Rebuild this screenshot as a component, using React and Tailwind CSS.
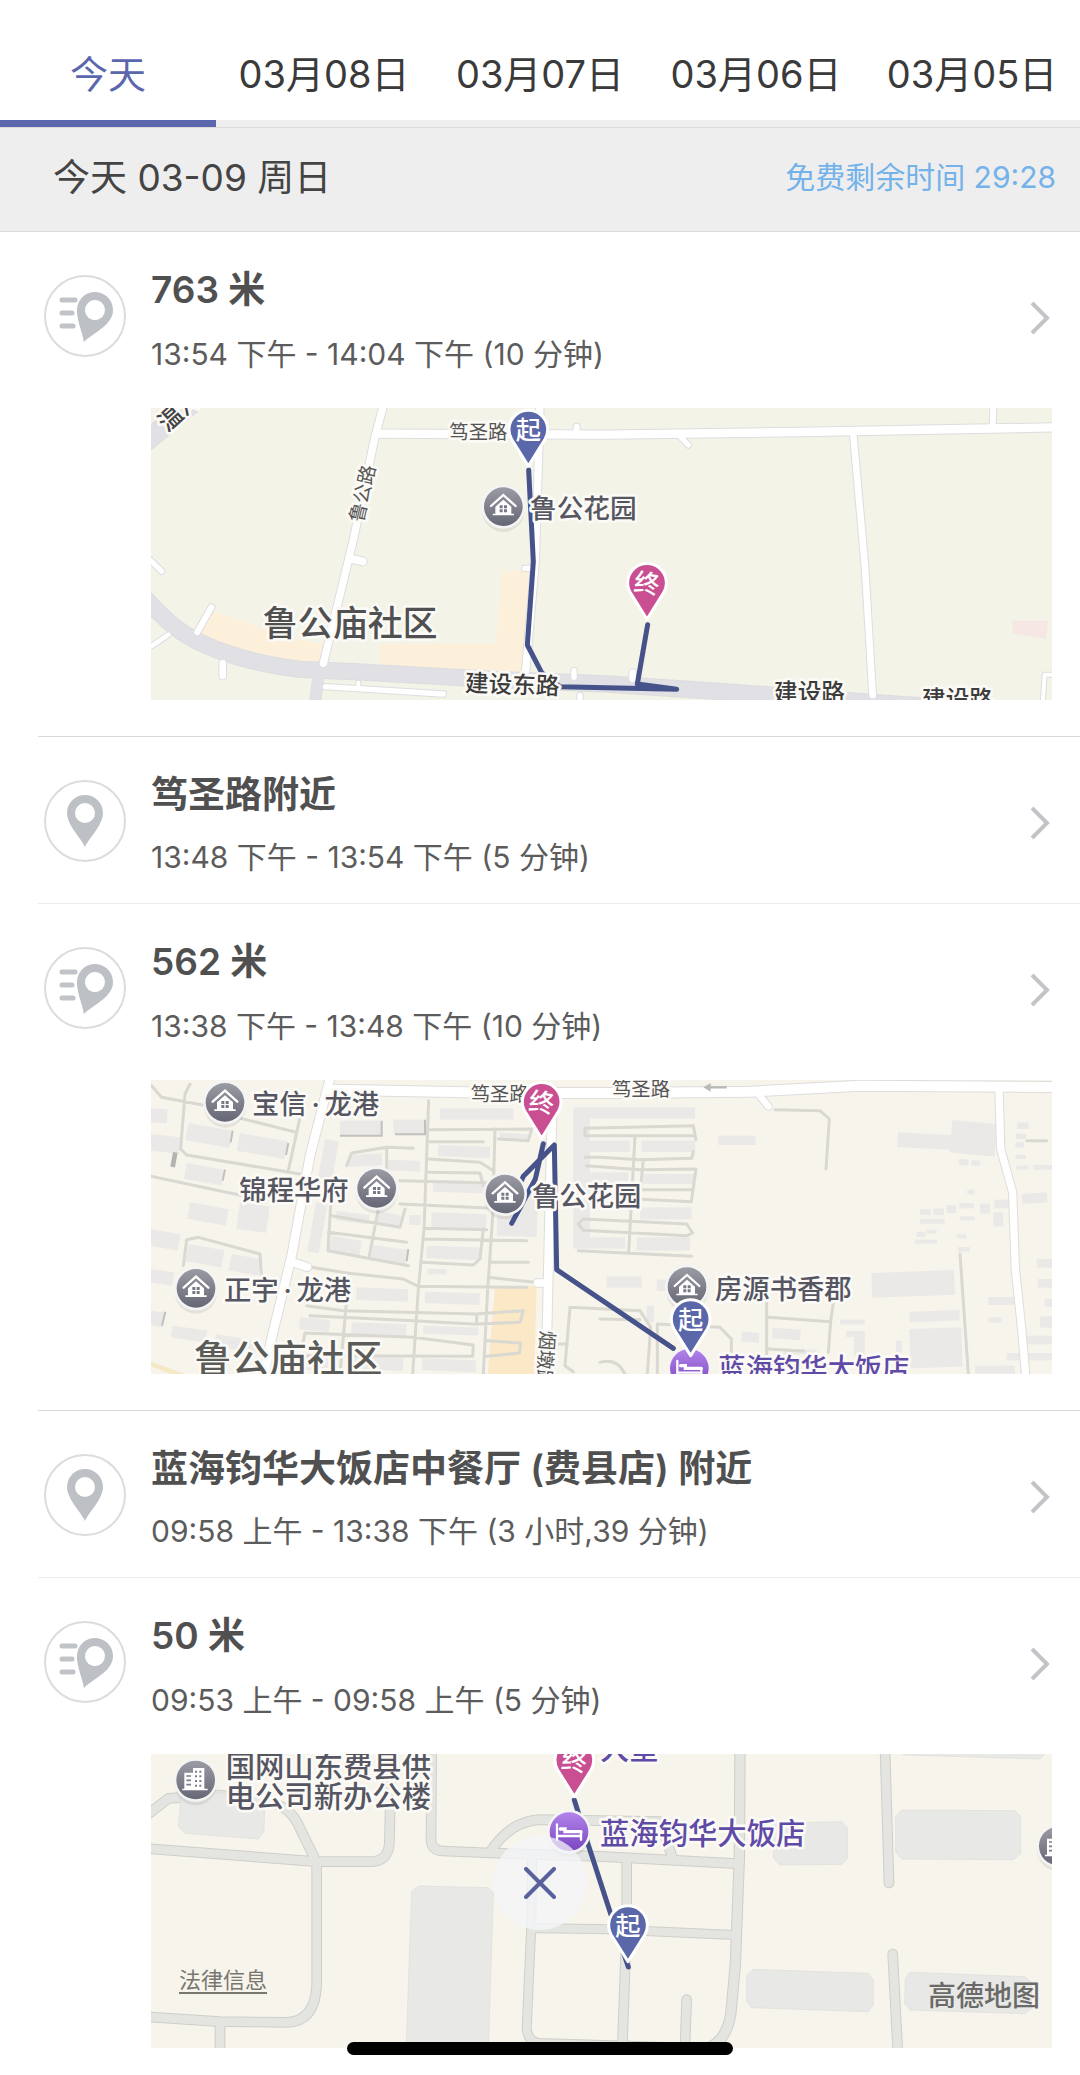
import React, { useState } from 'react';

const days = ['今天', '03月08日', '03月07日', '03月06日', '03月05日'];

const PIN_START = '#5a67a8';
const PIN_END = '#c94f92';

const ChevronRight = () => (
  <svg className="mt-8 h-9 w-5 shrink-0" viewBox="0 0 20 36" fill="none" stroke="#c3c4c8" strokeWidth="4">
    <path d="M2 3L17 18L2 33" />
  </svg>
);

const RowIcon = ({ moving }) => (
  <span className="mt-[7px] h-[82px] w-[82px] shrink-0 rounded-full border-2 border-[#dcdcde]">
    <svg className="-m-0.5 h-[82px] w-[82px]" viewBox="0 0 82 82">
      {moving && (
        <path d="M18 25H31M18 38H28M18 51H29" stroke="#c0c3c7" strokeWidth="5" strokeLinecap="round" />
      )}
      <g transform={moving ? 'translate(51 35) rotate(19)' : 'translate(41 33)'}>
        <path
          fill="#bdc1c6"
          fillRule="evenodd"
          d="M0 34C-4 25-18 12-18 0A18 18 0 0 1 18 0C18 12 4 25 0 34ZM0-10A10 10 0 0 0 0 10A10 10 0 0 0 0-10Z"
        />
      </g>
    </svg>
  </span>
);

// every road casing goes under every road fill so that junctions merge
const Roads = ({ roads, fill, edge }) => (
  <g fill="none" strokeLinecap="round" strokeLinejoin="round">
    {roads.map(([d, w]) => (
      <path key={d} d={d} stroke={edge} strokeWidth={w + 6} />
    ))}
    {roads.map(([d, w, color]) => (
      <path key={d} d={d} stroke={color || fill} strokeWidth={w} />
    ))}
  </g>
);

const Label = ({ x, y, size = 82, color = '#555662', weight = 500, rotate = 0, children }) => (
  <text
    transform={`translate(${x} ${y}) rotate(${rotate})`}
    fontSize={size}
    fontWeight={weight}
    fill={color}
    stroke="#fbfaf6"
    strokeWidth="16"
    strokeLinejoin="round"
    paintOrder="stroke"
  >
    {children}
  </text>
);

const Pin = ({ x, y, end }) => (
  <g transform={`translate(${x} ${y})`}>
    <path
      d="M0 110L-50 30A58 58 0 1 1 50 30Z"
      fill={end ? PIN_END : PIN_START}
      stroke="#fff"
      strokeWidth="9"
      strokeLinejoin="round"
    />
    <text y="30" fontSize="76" fontWeight="500" fill="#fff" textAnchor="middle" transform={end ? 'rotate(8)' : ''}>
      {end ? '终' : '起'}
    </text>
  </g>
);

const Poi = ({ x, y, type = 'house' }) => (
  <g transform={`translate(${x} ${y})`}>
    <ellipse cy="10" rx="64" ry="66" fill="#000" opacity="0.07" />
    <circle r="66" fill="#f4f4f4" />
    <circle r="58" fill={type === 'hotel' ? 'url(#poiPurple)' : 'url(#poiGray)'} />
    {type === 'house' && (
      <g>
        <path d="M-37-2L0-35L37-2" fill="none" stroke="#fff" strokeWidth="7" strokeLinecap="round" />
        <path d="M-24 0L0-21L24 0V21H32V26H-32V21H-24Z" fill="#fff" />
        <path d="M-11-4H-2V5H-11ZM2-4H11V5H2ZM-11 8H-2V17H-11ZM2 8H11V17H2Z" fill="#777885" />
      </g>
    )}
    {type === 'hotel' && (
      <g fill="none" stroke="#fff" strokeWidth="7" strokeLinecap="round">
        <path d="M-36-22V24M-36 13H36M36 24V2" />
        <path d="M-26-8H-12V0H36" strokeWidth="10" />
      </g>
    )}
    {type === 'office' && (
      <g>
        <path d="M-34-22H-8V-36H26V26H36V31H-40V26H-34Z" fill="#fff" />
        <path
          d="M1-28V22M14-28V22"
          stroke="#7c7d89"
          strokeWidth="6"
          strokeDasharray="6 8"
        />
        <path d="M-28-12H-14M-28 1H-14M-28 14H-14" stroke="#7c7d89" strokeWidth="5" />
      </g>
    )}
  </g>
);

const Route = ({ d }) => (
  <path d={d} fill="none" stroke="#46528a" strokeWidth="15" strokeLinecap="round" strokeLinejoin="round" />
);

const MapFrame = ({ viewBox, label, children }) => (
  <svg
    viewBox={viewBox}
    role="img"
    aria-label={label}
    className="block h-auto w-full font-['Inter','Noto_Sans_CJK_SC',sans-serif]"
  >
    <defs>
      <linearGradient id="poiGray" x1="0" y1="0" x2="0" y2="1">
        <stop offset="0" stopColor="#9a9ba4" />
        <stop offset="1" stopColor="#666775" />
      </linearGradient>
      <linearGradient id="poiPurple" x1="0" y1="0" x2="0" y2="1">
        <stop offset="0" stopColor="#b184ea" />
        <stop offset="1" stopColor="#7b45c0" />
      </linearGradient>
    </defs>
    {children}
  </svg>
);

const AfternoonMap = () => {
  const gray = '#e0e0e5';
  const roads = [
    ['M20 122L150 15', 56, gray],
    ['M20 600C80 665 120 700 190 732C250 760 340 790 480 808L640 815L1060 838L1400 852L1760 876L2300 915L2760 940', 46, gray],
    ['M535 830L524 915', 30, gray],
    ['M712 101L1400 104L1980 96L2750 82', 25],
    ['M732 10L705 110L640 420L550 790', 22],
    ['M630 475L668 484', 24],
    ['M1200 10L1197 120L1186 480L1157 812', 22],
    ['M2140 105L2175 500L2198 885', 20],
    ['M2560 10L2558 80', 18],
    ['M1618 106L1645 135', 16],
    ['M1310 80V95', 18],
    ['M556 860L910 882', 16],
    ['M655 848V858', 12],
    ['M248 790V828', 20],
    ['M20 748L85 704', 14],
    ['M172 696L214 622', 18],
    ['M20 470L65 514', 16],
    ['M1154 505H1175', 16],
    ['M1302 812V832', 16],
    ['M1320 886V915', 16],
    ['M1478 818V836', 20],
    ['M2750 824H2714L2708 915', 12],
  ];
  return (
    <MapFrame viewBox="33 24 2703 877" label="763 米路线">
      <path d="M0 0H2800V920H0Z" fill="#f4f3e7" />
      <path d="M200 640L240 638L400 700L552 735L545 790L345 770L175 705Z" fill="#fcf0da" />
      <path d="M722 732H1068L1085 512H1165L1152 820L718 795Z" fill="#fcf0da" />
      <path d="M2617 662H2725L2718 716L2617 700Z" fill="#f7e7e4" />
      <Roads roads={roads} fill="#fff" edge="#dddde0" />
      <Label x="668" y="370" size="58" color="#555" rotate="-77" weight="400">鲁公路</Label>
      <Label x="82" y="98" size="72" color="#444" rotate="-42">温河</Label>
      <Label x="928" y="118" size="58" color="#555" weight="400">笃圣路</Label>
      <Label x="368" y="708" size="105" color="#505050">鲁公庙社区</Label>
      <Poi x="1090" y="320" />
      <Route d="M1166 210L1180 485L1162 735L1205 818L1260 860L1610 868L1492 852L1523 674" />
      <Label x="1170" y="354" size="80">鲁公花园</Label>
      <Label x="974" y="874" size="71" color="#3c3c3c" rotate="2">建设东路</Label>
      <Label x="1902" y="902" size="71" color="#3c3c3c">建设路</Label>
      <Label x="2346" y="924" size="71" color="#3c3c3c">建设路</Label>
      <Pin x="1165" y="88" />
      <Pin x="1521" y="548" end />
    </MapFrame>
  );
};

// x, y, width, height, angle
const blocks = [
  [33, 118, 50, 42, 3], [33, 195, 90, 50, 6], [145, 162, 135, 52, 10], [300, 192, 145, 54, 10],
  [140, 282, 115, 48, 10], [150, 400, 118, 50, 10], [300, 400, 90, 80, 8], [33, 480, 90, 50, 10],
  [145, 525, 110, 52, 10], [275, 555, 90, 50, 10], [33, 600, 70, 40, 8], [33, 725, 42, 44, 8],
  [98, 770, 105, 36, 8], [228, 795, 130, 36, 10], [600, 155, 125, 44, 0], [760, 152, 92, 42, 0],
  [900, 118, 220, 34, 0], [895, 228, 155, 34, 2], [880, 332, 165, 36, 2], [875, 430, 165, 44, 2],
  [860, 530, 165, 38, 2], [862, 600, 58, 16, 0], [855, 668, 165, 34, 2], [850, 770, 165, 24, 2],
  [848, 868, 160, 36, 2], [625, 258, 100, 36, -3], [745, 272, 95, 32, 2], [575, 500, 92, 46, 10],
  [698, 528, 108, 46, 8], [590, 425, 100, 28, 8], [715, 425, 70, 38, 12], [808, 438, 34, 30, 0],
  [555, 210, 42, 145, 10], [528, 400, 35, 150, 10], [650, 655, 155, 38, 2], [635, 760, 165, 34, 2],
  [480, 745, 90, 36, 5], [625, 862, 165, 38, 2], [485, 862, 110, 40, 2], [1080, 190, 85, 22, 4],
  [1075, 360, 120, 140, 2], [1300, 115, 365, 34, 0], [1300, 215, 170, 34, 0], [1505, 215, 160, 34, 0],
  [1300, 310, 165, 30, 0], [1510, 315, 155, 30, 0], [1500, 415, 155, 36, 0], [1300, 505, 155, 34, 0],
  [1490, 505, 160, 40, 0], [1400, 622, 105, 34, 0], [1300, 130, 50, 400, 0], [1735, 200, 112, 28, 0],
  [2274, 190, 165, 44, 3], [2437, 153, 135, 98, 5], [2458, 270, 28, 18, 5], [2495, 273, 26, 16, 5],
  [2632, 160, 34, 20, 0], [2628, 194, 30, 16, 0], [2626, 220, 26, 16, 0], [2626, 258, 32, 12, 0],
  [2628, 290, 38, 12, 0], [2680, 288, 60, 14, 0], [2645, 375, 75, 30, -4], [2563, 392, 46, 26, 0],
  [2482, 362, 22, 14, 0], [2340, 420, 32, 18, 0], [2380, 418, 32, 20, 0], [2420, 408, 28, 24, 0],
  [2458, 402, 44, 16, 0], [2340, 450, 74, 14, 0], [2460, 442, 44, 12, 0], [2520, 404, 30, 30, 0],
  [2560, 430, 30, 42, 0], [2330, 488, 26, 16, 0], [2360, 482, 30, 12, 0], [2325, 512, 66, 12, 0],
  [2450, 496, 28, 12, 0], [2454, 534, 36, 14, 0], [2690, 570, 50, 26, 0], [2694, 630, 46, 26, 0],
  [2545, 684, 80, 24, 0], [2545, 745, 40, 16, 0], [2714, 690, 30, 24, 0], [2700, 742, 40, 34, 0],
  [2660, 800, 80, 26, 0], [2600, 852, 140, 22, 0], [2505, 890, 120, 24, 0], [2194, 612, 248, 74, -2],
  [2308, 728, 150, 32, -2], [2308, 780, 156, 118, -2], [2100, 752, 74, 14, 0], [2118, 786, 56, 18, 0],
  [2142, 786, 32, 76, 0], [1806, 788, 52, 30, 4], [1898, 776, 85, 32, 4], [1930, 842, 100, 14, 0],
  [2268, 815, 18, 36, 0], [1550, 632, 40, 34, 0], [1520, 710, 22, 50, 0],
];

const blockLanes =
  'M25 40L65 85L200 110M150 45L135 75L122 240L140 258L480 315M290 145L470 190M490 100L445 305M25 320L330 385' +
  'M130 590L140 512L175 505L360 555L364 620M620 290L635 252L740 235L820 238M740 240V300M575 440L780 475L795 420' +
  'M565 490L800 520M572 410L564 545L805 590M715 420L688 560M866 95L852 480L835 660L818 915M870 182L1175 180L1165 215L1075 210' +
  'M1065 180L1058 440L1042 680L1030 915M870 218H1030M865 270L1020 280L1060 305M865 310L1020 312L1030 350M780 335L1050 342' +
  'M780 405L1060 418M855 478L1040 482M850 510L1160 515M848 580L1000 588L1020 570L1030 480M1050 580H1165' +
  'M515 595L620 612L790 630L835 652L1160 655M1045 625L1185 640M500 710L610 725L1010 735L1150 725L1140 760L1010 765' +
  'M510 740L820 755L1010 766L1010 735M620 690L600 915M485 840L495 792L820 805L1000 828L998 862L490 860M1040 815L1142 822L1138 852L1040 862' +
  'M1360 200H1335V178L1660 170L1668 212M1360 200H1664M1335 265L1380 265L1500 272L1655 268L1660 248M1485 200L1466 550' +
  'M1510 272L1498 395M1340 290L1500 302L1668 300L1654 398L1490 390M1500 362H1655M1330 450L1640 465L1658 492L1640 500L1330 484L1315 465Z' +
  'M1315 545L1655 562M1290 715L1500 725L1532 775L1522 915M1290 715L1275 890L1300 908M1552 915V765L1740 775L1774 810V850' +
  'M1880 700V915M1885 745L2072 758L2080 700M2072 758L2065 850M1885 840L1990 846M1380 750L1500 752M1380 880Q1430 865 1455 915' +
  'M1255 825H1282M2660 215H2720M2460 555L2485 915M1905 122L2040 125L2068 150L2058 300';

const NoonMap = () => {
  const roads = [
    ['M580 62L1100 72L1400 72L1830 68L2160 50L2750 54', 30],
    ['M572 20L510 260L455 560L392 820L370 930', 26],
    ['M458 580L502 594', 24],
    ['M1238 65L1232 300L1226 560L1218 930', 26],
    ['M1192 642H1220', 22],
    ['M2577 62L2582 240L2618 370L2626 600L2645 780L2658 930', 22],
    ['M1855 75L1885 112', 20],
  ];
  return (
    <MapFrame viewBox="33 33 2703 882" label="562 米路线">
      <path d="M0 0H2800V930H0Z" fill="#f7f4ec" />
      <path d="M1065 660L1190 650L1182 930H1042Z" fill="#fae8c6" />
      <path d="M20 880L140 925" stroke="#f3e9c4" strokeWidth="14" />
      {blocks.map(([x, y, w, h, a]) => (
        <rect key={`${x}-${y}`} x={x} y={y} width={w} height={h} fill="#eae9e7" transform={`rotate(${a} ${x} ${y})`} />
      ))}
      <path
        d="M725 155V200H600M855 152V196H765M278 185L272 220M255 302L248 335M445 222L438 258M76 728L66 770M805 540L800 576"
        fill="none"
        stroke="#c2c0bd"
        strokeWidth="6"
      />
      <path d="M106 250L98 294" stroke="#b5b3b0" strokeWidth="14" />
      <path d={blockLanes} fill="none" stroke="#d9d8d1" strokeWidth="9" strokeLinejoin="round" strokeLinecap="round" />
      <Roads roads={roads} fill="#fff" edge="#dedddc" />
      <path d="M1700 55H1760" stroke="#b9b9b9" strokeWidth="7" />
      <path d="M1690 55L1712 42V68Z" fill="#b9b9b9" />
      <Label x="992" y="97" size="58" color="#555" weight="400">笃圣路</Label>
      <Label x="1416" y="80" size="58" color="#555" weight="400">笃圣路</Label>
      <Label x="1202" y="784" size="58" color="#555" weight="400" rotate="94">烟墩路</Label>
      <Label x="162" y="908" size="113" color="#5a5a58">鲁公庙社区</Label>
      <Route d="M1210 224L1186 330L1115 463M1140 345L1150 322L1243 228L1250 602L1600 838" />
      <Poi x="255" y="100" />
      <Label x="336" y="134">宝信&thinsp;·&thinsp;龙港</Label>
      <Poi x="710" y="358" />
      <Label x="298" y="392">锦程华府</Label>
      <Poi x="1095" y="375" />
      <Label x="1176" y="410">鲁公花园</Label>
      <Poi x="168" y="658" />
      <Label x="252" y="694">正宇&thinsp;·&thinsp;龙港</Label>
      <Poi x="1641" y="653" />
      <Label x="1725" y="690">房源书香郡</Label>
      <Poi x="1648" y="898" type="hotel" />
      <Label x="1735" y="926" color="#5f4ba6">蓝海钧华大饭店</Label>
      <Pin x="1205" y="98" end />
      <Pin x="1652" y="750" />
    </MapFrame>
  );
};

const MorningMap = () => {
  const roads = [
    ['M15 215L85 160L240 150L400 175Q455 190 480 250L528 348', 26],
    ['M15 310L530 350L690 350Q745 350 748 295L755 10', 26],
    ['M530 350V720Q525 830 440 832L240 830L15 815', 26],
    ['M240 835V930', 26],
    ['M875 10L873 285Q875 318 910 318L1050 324L1380 334L1790 356', 26],
    ['M1050 322Q1110 228 1200 224L1560 230L1600 345', 26],
    ['M1800 10L1798 340L1786 660L1772 810Q1758 890 1700 910', 28],
    ['M1176 340L1174 540L1160 850Q1164 892 1200 894L1700 910', 24],
    ['M1176 550L1380 552L1785 570', 24],
    ['M1460 350V540L1446 930', 26],
    ['M1640 764L1634 930', 26],
    ['M2235 10L2247 414', 26],
    ['M2258 627L2274 930', 26],
  ];
  return (
    <MapFrame viewBox="33 27 2703 882" label="50 米路线">
      <path d="M0 0H2800V930H0Z" fill="#f7f4ec" />
      <Roads roads={roads} fill="#e4e5e0" edge="#cecfca" />
      <g fill="#e8e8e7" stroke="#dcdcda" strokeWidth="2">
        <path d="M835 423L1045 428L1060 445L1045 920H798L815 440Z" />
        <path d="M125 140L375 150L372 260L355 282L135 265L115 245Z" />
        <path d="M2285 195L2625 197L2642 215V325L2620 344L2285 342L2267 322V215Z" />
        <path d="M1900 235L2105 230L2122 248V340L2105 358L1920 360L1900 340Z" />
        <path d="M1840 673L2185 685L2200 705V780L2185 800L1835 788L1820 770V692Z" />
        <path d="M2310 682L2655 695L2675 712V790L2655 806L2310 795L2294 775L2296 700Z" />
        <path d="M2290 20H2712V30L2700 42L2290 30Z" />
      </g>
      <Poi x="167" y="105" type="office" />
      <Label x="257" y="97" size="88">国网山东费县供</Label>
      <Label x="257" y="185" size="88">电公司新办公楼</Label>
      <Label x="1380" y="42" size="88" color="#5f4ba6">大堂</Label>
      <Route d="M1303 165L1345 300L1410 500L1465 666" />
      <Poi x="1287" y="260" type="hotel" />
      <Label x="1380" y="298" size="88" color="#5f4ba6">蓝海钧华大饭店</Label>
      <Poi x="2755" y="303" type="office" />
      <Pin x="1303" y="45" end />
      <Pin x="1464" y="540" />
    </MapFrame>
  );
};

const records = [
  { id: 1, title: '763 米', time: '13:54 下午 - 14:04 下午 (10 分钟)', Map: AfternoonMap },
  { id: 2, title: '笃圣路附近', time: '13:48 下午 - 13:54 下午 (5 分钟)' },
  { id: 3, title: '562 米', time: '13:38 下午 - 13:48 下午 (10 分钟)', Map: NoonMap },
  { id: 4, title: '蓝海钧华大饭店中餐厅 (费县店) 附近', time: '09:58 上午 - 13:38 下午 (3 小时,39 分钟)' },
  { id: 5, title: '50 米', time: '09:53 上午 - 09:58 上午 (5 分钟)', Map: MorningMap, last: true },
];

const RecordRow = ({ record }) => {
  const { title, time, Map, last } = record;
  return (
    <li className={`ml-[38px] ${last ? '' : Map ? 'border-b border-[#d9d9d9]' : 'border-b border-[#ebebeb]'}`}>
      <button type="button" className={`flex w-full items-start gap-[25px] pt-9 pr-[30px] pl-1.5 text-left ${Map ? 'pb-9' : 'pb-7'}`}>
        <RowIcon moving={Boolean(Map)} />
        <span className={`flex flex-1 flex-col ${Map ? 'gap-6' : 'gap-[22px]'}`}>
          <span className="text-[37px] leading-[44px] font-semibold text-[#505050]">{title}</span>
          <span className="text-[30px] leading-9 text-[#5c5c5c]">{time}</span>
        </span>
        <ChevronRight />
      </button>
      {Map && (
        <div className="relative mr-7 mb-9 ml-[113px]">
          <Map />
          {last && (
            <>
              <a href="#legal" className="absolute bottom-[52px] left-7 text-[22px] leading-8 text-[#777770] underline underline-offset-4">
                法律信息
              </a>
              <span className="absolute right-3 bottom-8 text-[28px] leading-10 font-medium text-[#6a6a68]">高德地图</span>
            </>
          )}
        </div>
      )}
    </li>
  );
};

const App = () => {
  const [activeDay, setActiveDay] = useState(0);

  return (
    <div className="relative min-h-screen overflow-hidden bg-white font-['Inter','Noto_Sans_CJK_SC',sans-serif]">
      <nav className="grid grid-cols-5 pt-7">
        {days.map((day, i) => (
          <button
            key={day}
            type="button"
            onClick={() => setActiveDay(i)}
            className={`h-[99px] border-b-7 text-[38px] whitespace-nowrap ${
              i === activeDay ? 'border-[#5a67ad] text-[#5a67ad]' : 'border-[#eeeeee] text-[#3a3a3a]'
            }`}
          >
            {day}
          </button>
        ))}
      </nav>

      <header className="flex h-[105px] items-center justify-between border-y border-[#dcdcdc] bg-[#eeeeee] pr-6 pb-1 pl-[53px]">
        <h1 className="text-[37px] text-[#444444]">今天 03-09 周日</h1>
        <p className="text-[30px] text-[#74b2ea]">免费剩余时间 29:28</p>
      </header>

      <ul className="-mb-4">
        {records.map(record => (
          <RecordRow key={record.id} record={record} />
        ))}
      </ul>

      <div className="absolute inset-x-0 bottom-5 flex flex-col items-center gap-28">
        <button
          type="button"
          aria-label="关闭"
          className="flex h-[94px] w-[94px] items-center justify-center rounded-full bg-[#f4f5fa]/75"
        >
          <svg className="h-8 w-8" viewBox="0 0 32 32" stroke="#59629c" strokeWidth="4" strokeLinecap="round">
            <path d="M2 2L30 30M30 2L2 30" />
          </svg>
        </button>
        <div className="h-[13px] w-[386px] rounded-full bg-black" />
      </div>
    </div>
  );
};

export default App;
